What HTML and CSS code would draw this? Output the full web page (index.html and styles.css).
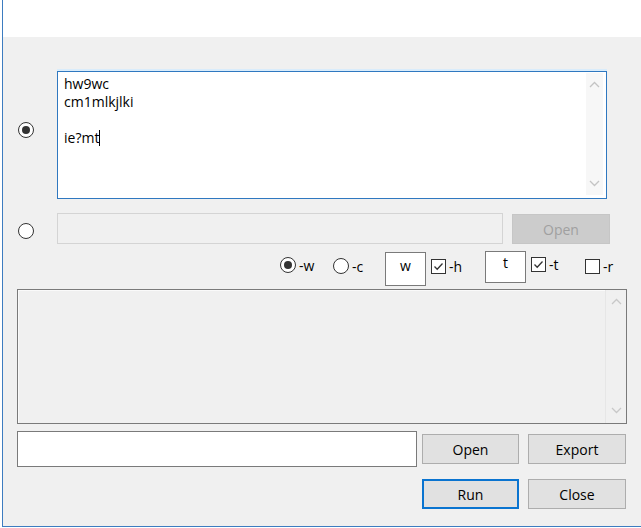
FILE: index.html
```html
<!DOCTYPE html>
<html>
<head>
<meta charset="utf-8">
<title>Dialog</title>
<link rel="stylesheet" href="styles.css">
</head>
<body>
<div class="window">
  <div class="titlebar"></div>
  <div class="content">
    <div class="row row-a">
      <div class="radio-cell"><span class="radio checked ra"></span></div>
      <div class="textarea">
        <div class="ta-text">hw9wc<br>cm1mlkjlki<br><br>ie?mt<span class="caret"></span></div>
        <div class="vscroll light">
          <svg class="chev" width="11" height="7" viewBox="0 0 11 7"><polyline points="1,6 5.5,1.5 10,6" fill="none" stroke="#c4c4c4" stroke-width="1.3"/></svg>
          <svg class="chev" width="11" height="7" viewBox="0 0 11 7"><polyline points="1,1 5.5,5.5 10,1" fill="none" stroke="#c4c4c4" stroke-width="1.3"/></svg>
        </div>
      </div>
    </div>

    <div class="row row-b">
      <div class="radio-cell"><span class="radio rb"></span></div>
      <div class="textbox disabled"></div>
      <div class="btn btn-disabled">Open</div>
    </div>

    <div class="row options">
      <div class="opt opt-w"><span class="radio checked"></span><span class="lbl">-w</span></div>
      <div class="opt opt-c"><span class="radio"></span><span class="lbl">-c</span></div>
      <div class="mini box-w">w</div>
      <div class="opt opt-h"><span class="check on"><svg width="13" height="13" viewBox="0 0 13 13"><polyline points="2.5,6.5 5.2,9.3 10.5,3.5" fill="none" stroke="#333" stroke-width="1.3"/></svg></span><span class="lbl">-h</span></div>
      <div class="mini box-t">t</div>
      <div class="opt opt-t"><span class="check on"><svg width="13" height="13" viewBox="0 0 13 13"><polyline points="2.5,6.5 5.2,9.3 10.5,3.5" fill="none" stroke="#333" stroke-width="1.3"/></svg></span><span class="lbl">-t</span></div>
      <div class="opt opt-r"><span class="check"></span><span class="lbl">-r</span></div>
    </div>

    <div class="output">
      <div class="out-body"></div>
      <div class="vscroll out-scroll">
        <svg class="chev" width="11" height="7" viewBox="0 0 11 7"><polyline points="1,6 5.5,1.5 10,6" fill="none" stroke="#c8c8c8" stroke-width="1.3"/></svg>
        <svg class="chev" width="11" height="7" viewBox="0 0 11 7"><polyline points="1,1 5.5,5.5 10,1" fill="none" stroke="#c8c8c8" stroke-width="1.3"/></svg>
      </div>
    </div>

    <div class="row row-e">
      <div class="textbox input"></div>
      <div class="btn btn-open">Open</div>
      <div class="btn btn-export">Export</div>
    </div>

    <div class="row row-f">
      <div class="btn btn-run">Run</div>
      <div class="btn btn-close">Close</div>
    </div>
  </div>
</div>
</body>
</html>
```

FILE: styles.css
```css
html, body {
  margin: 0;
  padding: 0;
  background: #ffffff;
}
body {
  width: 641px;
  height: 528px;
  overflow: hidden;
  font-family: "Segoe UI", "Open Sans", "Noto Sans", sans-serif;
  font-size: 14px;
  color: #000;
}
.window {
  margin-left: 2px;
  border-left: 1px solid #3d7cc0;
  border-bottom: 1px solid #3d7cc0;
  width: 638px;
  display: flex;
  flex-direction: column;
}
.titlebar {
  height: 37px;
  background: #ffffff;
}
.content {
  height: 489px;
  background: #f0f0f0;
  display: flex;
  flex-direction: column;
}
.row {
  display: flex;
  align-items: flex-start;
  flex: none;
}

/* radios & checks */
.radio {
  display: block;
  box-sizing: border-box;
  width: 16px;
  height: 16px;
  border: 1px solid #333;
  border-radius: 50%;
  background: #fff;
  position: relative;
  flex: none;
}
.radio.checked {
  border-width: 1.5px;
}
.radio.checked::after {
  content: "";
  position: absolute;
  left: 2.5px;
  top: 2.5px;
  width: 8px;
  height: 8px;
  border-radius: 50%;
  background: #333;
}
.check {
  display: flex;
  align-items: center;
  justify-content: center;
  box-sizing: border-box;
  width: 15px;
  height: 15px;
  border: 1px solid #333;
  background: #fff;
  flex: none;
}
.radio-cell {
  width: 54px;
  flex: none;
}
.radio-cell .radio {
  margin-left: 15px;
}
.ra { margin-top: 51px; }
.rb { margin-top: 10px; }

/* row A */
.row-a {
  margin-top: 34px;
  height: 128px;
}
.textarea {
  box-sizing: border-box;
  width: 550px;
  height: 128px;
  border: 1px solid #2f78c0;
  background: #fff;
  display: flex;
  box-shadow: 0 -2px 0 #d9ecfb;
}
.ta-text {
  flex: 1;
  padding: 3px 0 0 6px;
  line-height: 18px;
  font-size: 14px;
  white-space: nowrap;
}
.caret {
  display: inline-block;
  width: 0;
  height: 16px;
  border-left: 1px solid #000;
  vertical-align: -3px;
}
.vscroll {
  flex: none;
  display: flex;
  flex-direction: column;
  justify-content: space-between;
  align-items: center;
  box-sizing: border-box;
}
.vscroll.light {
  width: 17px;
  margin: 1px 3px 3px 0;
  padding: 8px 0 8px;
  background: #f7f7f7;
}

/* row B */
.row-b {
  margin-top: 14px;
  height: 31px;
}
.textbox {
  box-sizing: border-box;
  flex: none;
}
.textbox.disabled {
  width: 446px;
  height: 31px;
  border: 1px solid #d4d4d4;
  background: #f0f0f0;
}
.btn {
  box-sizing: border-box;
  flex: none;
  display: flex;
  align-items: center;
  justify-content: center;
  height: 30px;
  border: 1px solid #adadad;
  background: #e1e1e1;
  font-size: 14px;
  color: #000;
}
.btn-disabled {
  width: 98px;
  margin-left: 9px;
  margin-top: 1px;
  background: #cccccc;
  border-color: #c6c6c6;
  color: #a0a0a0;
}

/* options */
.options {
  margin-top: 7px;
  height: 34px;
  padding-left: 277px;
}
.opt {
  display: flex;
  align-items: center;
  height: 16px;
  flex: none;
}
.lbl {
  margin-left: 3px;
  font-size: 14px;
  line-height: 15px;
}
.opt-w { width: 53px; margin-top: 6px; }
.opt-c { width: 52px; margin-top: 7px; }
.opt-h { width: 54px; margin-top: 7px; margin-left: 5px; }
.opt-t { width: 54px; margin-top: 5px; margin-left: 5px; }
.opt-r { margin-top: 7px; }
.mini {
  box-sizing: border-box;
  width: 41px;
  border: 1px solid #7a7a7a;
  background: #fff;
  text-align: center;
  line-height: 18px;
  flex: none;
}
.box-w { height: 34px; margin-top: 1px; padding-top: 4px; }
.box-t { height: 32px; margin-top: 0; padding-top: 2px; }

/* output */
.output {
  flex: none;
  margin-top: 4px;
  margin-left: 14px;
  box-sizing: border-box;
  width: 610px;
  height: 135px;
  border: 1px solid #7a7a7a;
  background: #f0f0f0;
  display: flex;
}
.out-body {
  flex: 1;
  box-shadow: inset 1px 1px 0 #fafafa;
}
.out-scroll {
  width: 21px;
  padding: 8px 0 9px;
  border-left: 1px solid #e6e6e6;
}

/* row E */
.row-e {
  margin-top: 7px;
  margin-left: 14px;
  height: 36px;
}
.textbox.input {
  width: 400px;
  height: 36px;
  border: 1px solid #7a7a7a;
  background: #fff;
}
.btn-open {
  width: 97px;
  margin-left: 5px;
  margin-top: 3px;
}
.btn-export {
  width: 98px;
  margin-left: 9px;
  margin-top: 3px;
}

/* row F */
.row-f {
  margin-top: 12px;
  margin-left: 419px;
}
.btn-run {
  width: 97px;
  border: 2px solid #0a74d0;
}
.btn-close {
  width: 98px;
  margin-left: 9px;
}
```
